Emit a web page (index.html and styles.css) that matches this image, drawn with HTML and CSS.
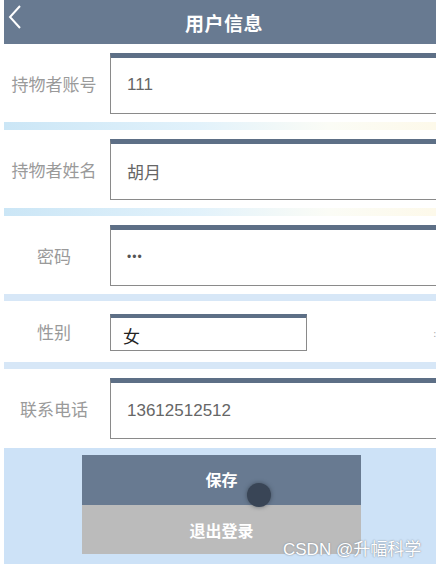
FILE: index.html
```html
<!DOCTYPE html>
<html lang="zh">
<head>
<meta charset="utf-8">
<link rel="stylesheet" href="styles.css">
</head>
<body>
<div class="page">
  <header class="topbar">
    <svg class="back" width="14" height="24" viewBox="0 0 14 24"><path d="M12 1 L2 12 L12 23" fill="none" stroke="#fff" stroke-width="2"/></svg>
    <h1 class="title">用户信息</h1>
  </header>

  <div class="row">
    <div class="label">持物者账号</div>
    <div class="field">111</div>
  </div>
  <div class="sep grad"></div>

  <div class="row">
    <div class="label">持物者姓名</div>
    <div class="field">胡月</div>
  </div>
  <div class="sep grad short"></div>

  <div class="row">
    <div class="label">密码</div>
    <div class="field pwd">•••</div>
  </div>
  <div class="sep"></div>

  <div class="row row-sm">
    <div class="label">性别</div>
    <div class="field select">女</div>
    <span class="edge-mark">:</span>
  </div>
  <div class="sep short"></div>

  <div class="row row-last">
    <div class="label">联系电话</div>
    <div class="field">13612512512</div>
  </div>

  <div class="footer">
    <div class="buttons">
      <div class="btn save">保存</div>
      <div class="btn logout">退出登录</div>
      <span class="touch"></span>
    </div>
    <span class="watermark">CSDN @升幅科学</span>
  </div>
</div>
</body>
</html>
```

FILE: styles.css
```css
html, body {
  margin: 0;
  padding: 0;
  background: #fff;
  overflow: hidden;
}
body {
  width: 436px;
  height: 564px;
  font-family: "Noto Sans CJK SC", "Noto Sans", sans-serif;
}
.page {
  margin-left: 4px;
  width: 432px;
  height: 564px;
  overflow: hidden;
  display: flex;
  flex-direction: column;
}
.topbar {
  height: 44px;
  flex: none;
  background: #687a91;
  display: flex;
  align-items: center;
  justify-content: center;
  position: relative;
}
.back {
  position: absolute;
  left: 4px;
  top: 5px;
}
.title {
  margin: 0 0 0 8px;
  color: #fff;
  font-size: 19px;
  font-weight: bold;
  letter-spacing: 0.5px;
}
.row {
  height: 78px;
  flex: none;
  display: flex;
  align-items: center;
  position: relative;
}
.row-sm {
  height: 61px;
  align-items: flex-start;
}
.row-last {
  height: 79px;
}
.label {
  width: 100px;
  flex: none;
  text-align: center;
  color: #9a9a9a;
  font-size: 17px;
}
.field {
  margin-left: 6px;
  width: 360px;
  height: 61px;
  flex: none;
  box-sizing: border-box;
  border-top: 5px solid #5d6f86;
  border-left: 1px solid #8a8a8a;
  border-bottom: 1px solid #8a8a8a;
  padding-left: 16px;
  display: flex;
  align-items: center;
  color: #666;
  font-size: 17px;
  font-family: "Liberation Sans", "Noto Sans CJK SC", sans-serif;
}
.row-sm .label {
  margin-top: 18px;
}
.field.pwd {
  font-size: 12px;
  letter-spacing: 1px;
  color: #555;
}
.field.select {
  margin-top: 13px;
  width: 197px;
  height: 37px;
  border: 1px solid #8a8a8a;
  border-top: 4px solid #5d6f86;
  padding-left: 12px;
  padding-top: 2px;
  color: #222;
  font-size: 17px;
  font-family: "Noto Sans CJK SC", sans-serif;
}
.edge-mark {
  position: absolute;
  right: 0;
  top: 26px;
  color: #aaa;
  font-size: 9px;
}
.sep {
  height: 7px;
  flex: none;
  background: #d7e7f7;
}
.sep.short {
  height: 7px;
}
.sep.grad {
  height: 8px;
  background: linear-gradient(90deg, #cbe6f6 0%, #e2f2fb 45%, #fbfcf6 75%, #fdf9ea 100%);
}
.footer {
  flex: 1;
  background: #cde2f7;
  position: relative;
  padding-top: 7px;
  margin-right: -4px;
}
.buttons {
  margin-left: 78px;
  width: 279px;
  display: flex;
  flex-direction: column;
  position: relative;
}
.btn {
  height: 50px;
  display: flex;
  align-items: center;
  justify-content: center;
  color: #fff;
  font-size: 16px;
  font-weight: bold;
}
.save {
  background: #687a91;
  padding-bottom: 3px;
  box-sizing: border-box;
}
.logout {
  background: #bbbbbb;
  height: 49px;
}
.touch {
  position: absolute;
  left: 165px;
  top: 28px;
  width: 24px;
  height: 24px;
  border-radius: 50%;
  background: #394556;
  box-shadow: 0 0 4px rgba(40, 50, 60, 0.6);
}
.watermark {
  position: absolute;
  left: 279px;
  top: 87px;
  color: #fff;
  font-size: 17px;
  font-family: "Liberation Sans", "Noto Sans CJK SC", sans-serif;
  text-shadow: 0 0 2px #8b96a3, 0 0 1px #8b96a3;
}
```
